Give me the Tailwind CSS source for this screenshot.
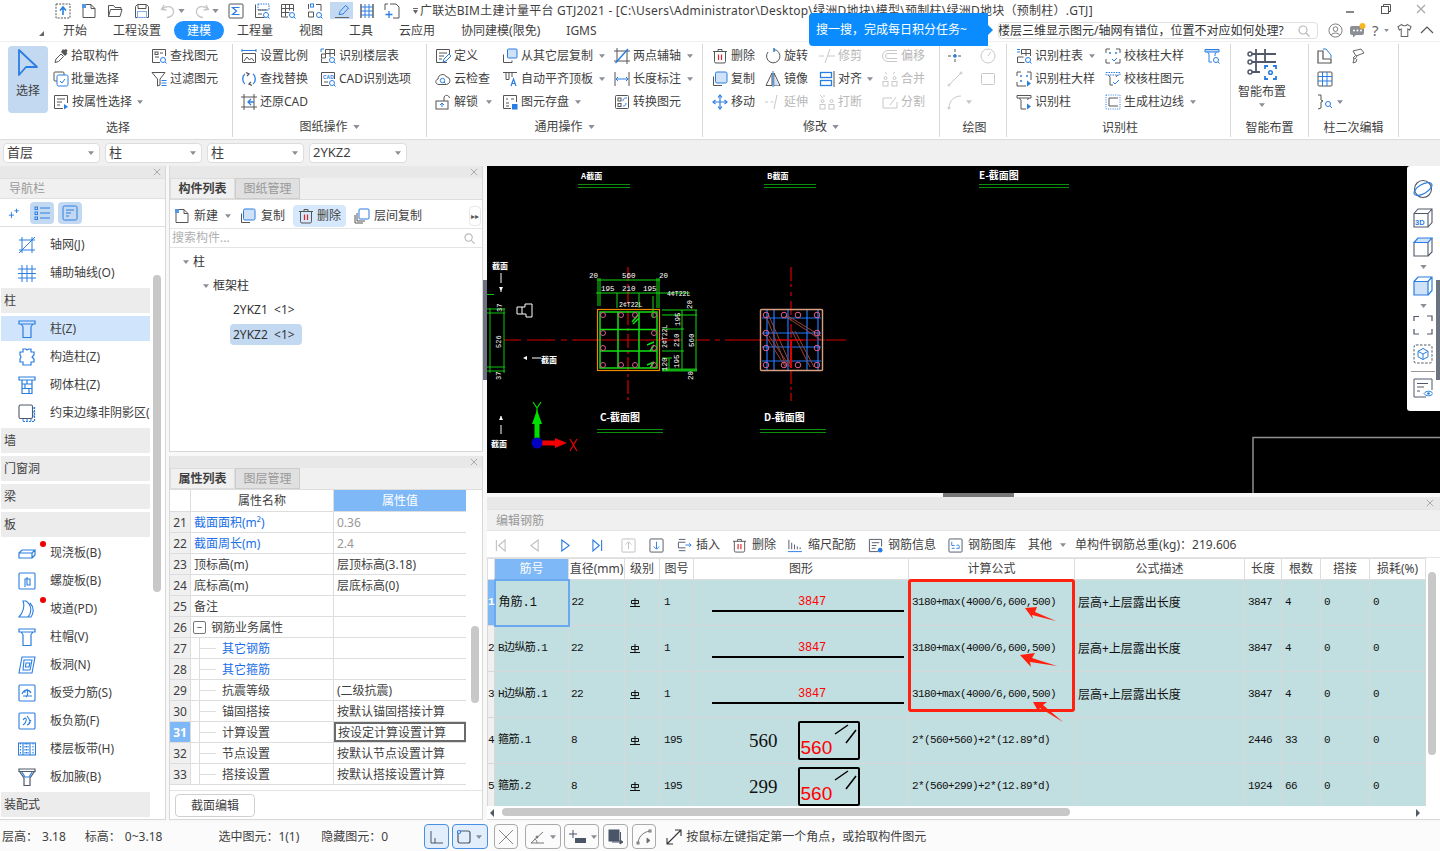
<!DOCTYPE html>
<html lang="zh-CN">
<head>
<meta charset="UTF-8">
<title>广联达BIM土建计量平台 GTJ2021</title>
<script src="https://cdn.jsdelivr.net/npm/@tailwindcss/browser@4"></script>
</head>
<body class="w-[1440px] h-[851px] overflow-hidden bg-[#fafafa] text-xs text-[#3f3f3f] font-['Noto_Sans','Noto_Sans_CJK_SC',sans-serif]">

<!-- icon sprites -->
<svg class="hidden" xmlns="http://www.w3.org/2000/svg">
  <defs>
    <linearGradient id="tlogo" x1="0" y1="0" x2="0" y2="1"><stop offset="0" stop-color="#1fd0f5"/><stop offset="1" stop-color="#0a7ff0"/></linearGradient>
  </defs>
  <symbol id="car" viewBox="0 0 8 5"><path d="M0 0h8L4 5z" fill="#8a8f98"/></symbol>
  <symbol id="x" viewBox="0 0 10 10"><path d="M1 1l8 8M9 1l-8 8" stroke="#a8a8a8" stroke-width="1.2" fill="none"/></symbol>
  <symbol id="rb" viewBox="0 0 10 9" fill="none" stroke="#111"><path d="M5 0v8M1.500 2.500h7v3h-7zM0 8.500h10"/></symbol>
  <!-- quick access -->
  <symbol id="q-up" viewBox="0 0 16 16" fill="none"><rect x="1" y="1" width="14" height="14" stroke="#555" stroke-dasharray="2 1.2"/><path d="M8 12V5M5 7.5L8 4l3 3.5" stroke="#2a7de1" stroke-width="1.6"/></symbol>
  <symbol id="q-new" viewBox="0 0 16 16" fill="none"><path d="M5 1.5h5l4 4v9H2V5" stroke="#555"/><path d="M10 1.5v4h4" stroke="#555"/><path d="M1 1h4v4H1z" fill="#2a7de1" opacity=".8"/></symbol>
  <symbol id="q-open" viewBox="0 0 16 16" fill="none" stroke="#555"><path d="M1.5 13.5v-11h5l1.500 2h6v2"/><path d="M1.500 13.500l2-7h11.500l-2 7z"/></symbol>
  <symbol id="q-save" viewBox="0 0 16 16" fill="none" stroke="#555"><path d="M1.500 3.500l2-2h9l2 2v11h-13z"/><path d="M4 1.500v4h8v-4"/><rect x="3.500" y="8.500" width="9" height="6" stroke="#7eb1ee"/></symbol>
  <symbol id="q-undo" viewBox="0 0 16 16" fill="none" stroke="#c4c4c4" stroke-width="1.300"><path d="M4 2L1.500 6.500 6.500 7"/><path d="M2 6.500c3-4 10-4 11.500 1 1 4-3 7-6.500 7"/></symbol>
  <symbol id="q-redo" viewBox="0 0 16 16" fill="none" stroke="#c4c4c4" stroke-width="1.300"><path d="M12 2l2.500 4.500L9.500 7"/><path d="M14 6.500c-3-4-10-4-11.500 1-1 4 3 7 6.500 7"/></symbol>
  <symbol id="q-sum" viewBox="0 0 16 16" fill="none"><rect x="1" y="1" width="14" height="14" rx="1" stroke="#555"/><path d="M11.500 4.500h-7L8.500 8l-4 3.500h7" stroke="#2a7de1" stroke-width="1.200"/></symbol>
  <symbol id="q-tab" viewBox="0 0 16 16" fill="none"><path d="M1.500 1.500v13h9" stroke="#555"/><rect x="4" y="1" width="11" height="6" stroke="#2a7de1" stroke-dasharray="1.500 1"/><path d="M4 7h9M4 11h4" stroke="#555"/><circle cx="12" cy="12" r="2.500" stroke="#2a7de1"/><path d="M14 14l1.500 1.500" stroke="#2a7de1"/></symbol>
  <symbol id="q-grid" viewBox="0 0 16 16" fill="none"><path d="M8 14H1.500V1.500h12V8M1.500 5.500h12M1.500 9.500h8M5.500 1.500v12M9.500 1.500v6" stroke="#555"/><circle cx="12" cy="12" r="2.500" stroke="#2a7de1"/><path d="M14 14l1.500 1.500" stroke="#2a7de1"/></symbol>
  <symbol id="q-grid2" viewBox="0 0 16 16" fill="none"><path d="M1.500 9v5h5V9zM9 1.500h5V8M1.500 1v5" stroke="#555"/><rect x="3.500" y="1" width="3" height="3" stroke="#2a7de1"/><circle cx="12" cy="12" r="2.500" stroke="#2a7de1"/><path d="M14 14l1.500 1.500" stroke="#2a7de1"/></symbol>
  <symbol id="q-pen" viewBox="0 0 16 16" fill="none"><path d="M1 14.500h14" stroke="#666"/><path d="M5 11.500l1-3 5.500-6 3 2.500L9 11z" stroke="#2a7de1"/></symbol>
  <symbol id="q-bars" viewBox="0 0 16 16" fill="none"><path d="M2 1v14M14 1v14" stroke="#555" stroke-width="1.400"/><path d="M2 4h12M2 8h12M2 12h12M6 1v14M10 1v14" stroke="#2a7de1"/></symbol>
  <symbol id="q-cross" viewBox="0 0 16 16" fill="none"><path d="M6 1h6l3 3v11H9M1 7V1h3" stroke="#555"/><path d="M5 8v7M1.500 11.500h7" stroke="#2a7de1" stroke-width="1.300"/></symbol>
  <!-- ribbon -->
  <symbol id="r-arrow" viewBox="0 0 24 30" fill="none"><path d="M3 2l18 17H10L3 27z" stroke="#2a7de1" stroke-width="1.800" stroke-linejoin="round"/></symbol>
  <symbol id="r-pick" viewBox="0 0 16 16" fill="none"><path d="M2 14.500L3 11l5-5 2.500 2.500-5 5z" stroke="#555"/><path d="M8 4l4 4 2.500-2.500-1-1 1-2-1.500-1.500-2 1-1-1z" fill="#555"/></symbol>
  <symbol id="r-batch" viewBox="0 0 16 16" fill="none"><rect x="1" y="1" width="10" height="9" rx="1" stroke="#555"/><rect x="4" y="4" width="11" height="11" rx="1.500" stroke="#2a7de1" fill="#fff"/><path d="M7 10l2 2 3-4" stroke="#2a7de1"/></symbol>
  <symbol id="r-attr" viewBox="0 0 16 16" fill="none"><path d="M10 14.500H1.500v-13h13V9" stroke="#555"/><path d="M4 5h8M4 8h5M4 11h3" stroke="#555"/><path d="M11 10v5.500l4-2.700z" fill="#2a7de1"/></symbol>
  <symbol id="r-find" viewBox="0 0 16 16" fill="none"><path d="M9 14.500H1.500v-13h13V8" stroke="#555"/><rect x="4" y="4" width="3" height="2.500" stroke="#555"/><path d="M9 5h3M4 9h4" stroke="#555"/><circle cx="12" cy="12" r="2.500" stroke="#2a7de1"/><path d="M14 14l1.500 1.500" stroke="#2a7de1"/></symbol>
  <symbol id="r-filter" viewBox="0 0 16 16" fill="none"><path d="M1 1.500h13L9 8v6l-2.500 1V8z" stroke="#555"/><path d="M10.500 9.500h5M10.500 12h5M10.500 14.500h5" stroke="#2a7de1"/></symbol>
  <symbol id="r-scale" viewBox="0 0 16 16" fill="none"><path d="M1 1v3M15 1v3M1 2.500h14" stroke="#2a7de1"/><path d="M1.500 5.500h13v9h-13z" stroke="#555"/><path d="M3 13l3-4 2.500 3 2-2 2.500 3" stroke="#555"/></symbol>
  <symbol id="r-floor" viewBox="0 0 16 16" fill="none"><path d="M1.500 6v4h4V6zM1.500 14.500v-4M1.500 14.500h7M5.500 1.500h9V8M5.500 1.500v4M10 1.500V9M5.500 5.500h9" stroke="#555"/><path d="M1 1h3M1 1v3" stroke="#2a7de1"/><circle cx="12" cy="12" r="2.500" stroke="#2a7de1"/><path d="M14 14l1.500 1.500" stroke="#2a7de1"/></symbol>
  <symbol id="r-replace" viewBox="0 0 16 16" fill="none" stroke-width="1.300"><path d="M4 3C1 5 1 11 4 13M12 13c3-2 3-8 0-10" stroke="#2a7de1"/><path d="M5 1.500l3 1.500-2 2M11 14.500L8 13l2-2" stroke="#555"/></symbol>
  <symbol id="r-cadopt" viewBox="0 0 16 16" fill="none"><path d="M9 14.500H1.500v-13h13V8" stroke="#555"/><text x="3" y="7.500" font-size="5" fill="#2a7de1" font-family="Liberation Sans" font-weight="700">CAD</text><path d="M4 11h4" stroke="#555"/><circle cx="12" cy="12" r="2.500" stroke="#2a7de1"/><path d="M14 14l1.500 1.500" stroke="#2a7de1"/></symbol>
  <symbol id="r-restore" viewBox="0 0 16 16" fill="none"><path d="M3 0v16M13 0v16M0 3h16M0 13h16" stroke="#555"/><path d="M10 5L7 8l3 3M7 8h6" stroke="#2a7de1" stroke-width="1.300"/></symbol>
  <symbol id="r-def" viewBox="0 0 16 16" fill="none"><path d="M12 14.500H1.500v-13h13v5" stroke="#555"/><path d="M4 5h8M4 8h5M4 11h3" stroke="#555"/><path d="M8 14l1-3 5-5 2 2-5 5z" stroke="#2a7de1"/></symbol>
  <symbol id="r-cloud" viewBox="0 0 16 16" fill="none"><path d="M4 13.500C0 13.500 0 8.500 3 8c0-5 7-6 8.500-2 4 0 5 6.500 0 7.500z" stroke="#555"/><circle cx="7.500" cy="9.500" r="2.200" stroke="#2a7de1"/><path d="M9 11l1.500 1.500" stroke="#2a7de1"/></symbol>
  <symbol id="r-lock" viewBox="0 0 16 16" fill="none"><rect x="1" y="7" width="12" height="8" stroke="#555"/><path d="M9 7V4c0-3.500 5-3.500 5.500 0" stroke="#555"/><path d="M7 13V9.500M5 11l2-2 2 2" stroke="#2a7de1"/></symbol>
  <symbol id="r-lcopy" viewBox="0 0 16 16" fill="none"><path d="M1.500 6.500v8h8.500v-2" stroke="#555"/><rect x="5.500" y="1" width="9.500" height="9" rx="1" fill="#cfe2f8" stroke="#2a7de1"/></symbol>
  <symbol id="r-lcopy2" viewBox="0 0 16 16" fill="none"><path d="M1 7v8h8M3 5v8h8" stroke="#555"/><rect x="5" y="1" width="10" height="10" rx="1" fill="#fff" stroke="#2a7de1"/></symbol>
  <symbol id="r-axis2" viewBox="0 0 16 16" fill="none"><path d="M3 0v14M13 2v14M0 3h16M0 13h16" stroke="#555"/><path d="M1.500 15L14 1" stroke="#2a7de1" stroke-width="1.400"/></symbol>
  <symbol id="r-align" viewBox="0 0 16 16" fill="none"><path d="M1 1.500h14" stroke="#555"/><path d="M4 1.500v7h3v-7M10 1.500V6" stroke="#555"/><path d="M9 15l2.500-7L14 15M10 12.500h3" stroke="#2a7de1" stroke-width="1.200"/></symbol>
  <symbol id="r-dim" viewBox="0 0 16 16" fill="none"><path d="M1 1v14M15 1v14" stroke="#555"/><path d="M2 8h12M4 6L2 8l2 2M12 6l2 2-2 2" stroke="#2a7de1"/></symbol>
  <symbol id="r-store" viewBox="0 0 16 16" fill="none"><path d="M9 14.500H1.500v-13h13V8" stroke="#555"/><path d="M4 5h2M9 5h3M4 9h3M4 12h3" stroke="#555"/><rect x="10" y="10" width="5.500" height="5.500" fill="#2a7de1"/></symbol>
  <symbol id="r-conv" viewBox="0 0 16 16" fill="none"><rect x="1.500" y="1.500" width="13" height="13" rx="1" stroke="#555"/><rect x="4" y="9.500" width="3" height="3" stroke="#555"/><rect x="4" y="4" width="3" height="3" stroke="#555"/><path d="M9 7c0-3 2-3 4-3M12 9c0 3-2 3-3 3" stroke="#2a7de1"/></symbol>
  <symbol id="r-del" viewBox="0 0 16 16" fill="none"><path d="M1 3.500h14M6 3.500v-2h4v2M2.500 3.500v10a1.500 1.500 0 001.500 1.500h8a1.500 1.500 0 001.500-1.500v-10" stroke="#555"/><path d="M6.500 6.500v5.500M9.500 6.500v5.500" stroke="#e0202a" stroke-width="1.200"/></symbol>
  <symbol id="r-rot" viewBox="0 0 16 16" fill="none"><path d="M9 1.500A6.700 6.700 0 113 4" stroke="#555"/><path d="M9 0v4" stroke="#2a7de1" stroke-width="1.500"/></symbol>
  <symbol id="r-trim" viewBox="0 0 16 16" fill="none" stroke="#c8c8c8"><path d="M0 8h5M9 8h7M11 1L6 15"/></symbol>
  <symbol id="r-offs" viewBox="0 0 16 16" fill="none" stroke="#c8c8c8"><path d="M15 2.500H6a5 5 0 000 11h9M15 5.500H6a2 2 0 000 5h9"/></symbol>
  <symbol id="r-copy" viewBox="0 0 16 16" fill="none"><path d="M1.500 5.500v9H10" stroke="#555"/><rect x="3.500" y="1" width="11.500" height="11" rx="1.500" fill="#cfe2f8" stroke="#2a7de1"/></symbol>
  <symbol id="r-mirr" viewBox="0 0 16 16" fill="none"><path d="M7 2L1 14.500h6zM9 2l6 12.500H9z" stroke="#555"/><path d="M8 0v16" stroke="#2a7de1"/><path d="M9.500 5l4.500 9.500H9.500z" fill="#cfe2f8"/></symbol>
  <symbol id="r-aln" viewBox="0 0 16 16" fill="none"><rect x="1.500" y="1.500" width="11" height="5" stroke="#2a7de1" stroke-width="1.300"/><rect x="1.500" y="9.500" width="11" height="5" stroke="#2a7de1" stroke-width="1.300"/><path d="M15 0v16" stroke="#555"/></symbol>
  <symbol id="r-merge" viewBox="0 0 16 16" fill="none" stroke="#c8c8c8"><circle cx="3.500" cy="7" r="1.500"/><circle cx="12.500" cy="7" r="1.500"/><rect x="1" y="10.500" width="5" height="4.500"/><rect x="10" y="10.500" width="5" height="4.500"/><path d="M3 1l2 2M13 1l-2 2"/></symbol>
  <symbol id="r-move" viewBox="0 0 16 16" fill="none" stroke="#2a7de1" stroke-width="1.200"><path d="M8 2v12M2 8h12"/><path d="M6 3.500L8 1l2 2.500M6 12.500L8 15l2-2.500M3.500 6L1 8l2.500 2M12.500 6L15 8l-2.500 2"/></symbol>
  <symbol id="r-ext" viewBox="0 0 16 16" fill="none" stroke="#c8c8c8"><path d="M0 8h3M5.500 8h3M12 1L9 15"/></symbol>
  <symbol id="r-brk" viewBox="0 0 16 16" fill="none" stroke="#c8c8c8"><circle cx="3.500" cy="7" r="1.500"/><circle cx="12.500" cy="7" r="1.500"/><rect x="1" y="10.500" width="5" height="4.500"/><rect x="10" y="10.500" width="5" height="4.500"/><path d="M1 1l3 3M5 1v2"/></symbol>
  <symbol id="r-split" viewBox="0 0 16 16" fill="none" stroke="#c8c8c8"><path d="M15 8v6H1V4h9"/><path d="M8 11l6-8"/></symbol>
  <symbol id="r-pt" viewBox="0 0 16 16" fill="none"><path d="M8 1v14M1 8h14" stroke="#555" stroke-dasharray="3 2"/><circle cx="8" cy="8" r="1.800" fill="#2a7de1"/></symbol>
  <symbol id="r-gauge" viewBox="0 0 16 16" fill="none" stroke="#c8c8c8"><circle cx="8" cy="8" r="7"/><path d="M8 8l3-4"/></symbol>
  <symbol id="r-line" viewBox="0 0 16 16" fill="none" stroke="#c8c8c8"><path d="M2 14L14 2"/><circle cx="2" cy="14" r="1"/><circle cx="14" cy="2" r="1"/></symbol>
  <symbol id="r-rect" viewBox="0 0 16 16" fill="none" stroke="#c8c8c8"><rect x="1.500" y="2.500" width="13" height="11" rx="1"/></symbol>
  <symbol id="r-arc" viewBox="0 0 16 16" fill="none" stroke="#c8c8c8"><path d="M2 14C2 7 7 2 14 2"/><circle cx="2" cy="14" r="1"/></symbol>
  <symbol id="r-ctab" viewBox="0 0 16 16" fill="none"><path d="M1.500 9v5.500h7M1.500 9h6M5.500 1.500h9V8M5.500 1.500v5M10 1.500V8M5.500 5.500h9" stroke="#555"/><path d="M1 1.500h3M1 4h3" stroke="#2a7de1"/><circle cx="12" cy="12" r="2.500" stroke="#2a7de1"/><path d="M14 14l1.500 1.500" stroke="#2a7de1"/></symbol>
  <symbol id="r-cdet" viewBox="0 0 16 16" fill="none"><path d="M1 5V1h4M11 1h4v8M1 11v4h9" stroke="#555"/><circle cx="5" cy="5" r="1" fill="#2a7de1"/><circle cx="11" cy="5" r="1" fill="#2a7de1"/><circle cx="5" cy="10" r="1" fill="#2a7de1"/><path d="M11 9.500v6l4-3z" fill="#2a7de1"/></symbol>
  <symbol id="r-col" viewBox="0 0 16 16" fill="none"><path d="M1 1.500h14V4H1zM3.500 4l1 2M12.500 4l-1 2M5 6v9h5" stroke="#555"/><path d="M11 9.500v6l4-3z" fill="#2a7de1"/></symbol>
  <symbol id="r-chk1" viewBox="0 0 16 16" fill="none"><path d="M1 5V1h4M11 1h4v4M1 11v4h4" stroke="#555"/><path d="M10 15h5v-4" stroke="#555"/><circle cx="5" cy="5" r="1" fill="#2a7de1"/><circle cx="11" cy="5" r="1" fill="#2a7de1"/><path d="M7 11l2 2 3-3" stroke="#2a7de1"/></symbol>
  <symbol id="r-chk2" viewBox="0 0 16 16" fill="none"><path d="M1 1.500h14V4H1z" stroke="#2a7de1" stroke-dasharray="1.500 1"/><path d="M3.500 4l1.500 2M12.500 4L11 6M5 6v8h3" stroke="#555"/><path d="M8 11l2 2 4-4" stroke="#2a7de1"/></symbol>
  <symbol id="r-edge" viewBox="0 0 16 16" fill="none"><rect x="1" y="1" width="14" height="14" stroke="#2a7de1" stroke-dasharray="1 1.300"/><path d="M4 12V4h9M4 12h9" stroke="#555"/></symbol>
  <symbol id="r-cfind" viewBox="0 0 16 16" fill="none"><path d="M1 1.500h14V4H1z" fill="#bcd6f5" stroke="#2a7de1"/><path d="M3.500 4l1.500 2M12.500 4L11 6M5 6v8h3M11 6v2" stroke="#2a7de1"/><circle cx="12" cy="12" r="2.500" stroke="#2a7de1"/><path d="M14 14l1.500 1.500" stroke="#2a7de1"/></symbol>
  <symbol id="r-smart" viewBox="0 0 30 32" fill="none"><path d="M9 1v24M18 1v14M3 6h26M3 14h26M3 24h10" stroke="#50586a" stroke-width="1.800"/><circle cx="3" cy="6" r="2" fill="#fff" stroke="#50586a" stroke-width="1.500"/><circle cx="3" cy="14" r="2" fill="#fff" stroke="#50586a" stroke-width="1.500"/><circle cx="3" cy="24" r="2" fill="#fff" stroke="#50586a" stroke-width="1.500"/><path d="M21 18h-3v3M26 18h3v3M21 31h-3v-3M26 31h3v-3" stroke="#2a7de1" stroke-width="1.800"/><circle cx="23.500" cy="24.500" r="1.800" stroke="#2a7de1" stroke-width="1.500"/></symbol>
  <symbol id="r-sec" viewBox="0 0 16 16" fill="none"><path d="M1 15V3h5v8h8v4z" stroke="#555" stroke-width="1.200"/><path d="M6 1h3l5 6v3" stroke="#2a7de1"/></symbol>
  <symbol id="r-brush" viewBox="0 0 16 16" fill="none" stroke="#666"><path d="M3 3l8-2 3 4-8 3zM5 8l-2 2 2 1 2-3M4 11l-1 4 3-1 1-3"/></symbol>
  <symbol id="r-mesh" viewBox="0 0 16 16" fill="none"><rect x="1" y="1" width="14" height="14" rx="1" stroke="#555"/><path d="M1 5.500h14M1 10h14M5.500 1v14M10 1v14" stroke="#2a7de1"/></symbol>
  <symbol id="r-brace" viewBox="0 0 16 16" fill="none"><path d="M1 1h3v5l2 1-2 1v6l-3 1" stroke="#555"/><circle cx="11" cy="10" r="2.500" stroke="#2a7de1"/><path d="M13 12l2 2" stroke="#2a7de1"/></symbol>
  <!-- top right -->
  <symbol id="t-user" viewBox="0 0 16 16" fill="none" stroke="#777"><circle cx="8" cy="8" r="7"/><circle cx="8" cy="6.500" r="2.500"/><path d="M3.500 13c1-3 8-3 9 0"/></symbol>
  <symbol id="t-chat" viewBox="0 0 16 16"><path d="M2 3h10a2 2 0 012 2v5a2 2 0 01-2 2H6l-3 2.500V12H2a2 2 0 01-2-2V5a2 2 0 012-2z" fill="#8b8f94"/><circle cx="4" cy="7.500" r="1" fill="#fff"/><circle cx="7.500" cy="7.500" r="1" fill="#fff"/><circle cx="11" cy="7.500" r="1" fill="#fff"/><circle cx="12.500" cy="3" r="3" fill="#f5b820"/></symbol>
  <symbol id="t-shirt" viewBox="0 0 16 16" fill="none" stroke="#666" stroke-width="1.100"><path d="M5 1.500L1 4l1.500 3.500L4.500 6.500v8h7v-8l2 1L15 4l-4-2.500c-1 2-5 2-6 0z"/></symbol>
  <!-- nav -->
  <symbol id="n-axis" viewBox="0 0 18 18" fill="none" stroke="#2a7de1"><path d="M4 1v16M14 1v16M1 4h16M1 14h16M1 17L17 1"/></symbol>
  <symbol id="n-aux" viewBox="0 0 18 18" fill="none" stroke="#2a7de1"><path d="M4 1v17M9 1v17M14 1v17M0 5h18M0 9.500h18M0 14h18"/></symbol>
  <symbol id="n-col" viewBox="0 0 18 18" fill="none" stroke="#2a7de1" stroke-width="1.200"><path d="M1 1h16v3H1zM3 4l2 2.500M15 4l-2 2.500M5 6.500v11h8v-11"/></symbol>
  <symbol id="n-cons" viewBox="0 0 18 18" fill="none" stroke="#2a7de1" stroke-width="1.200"><path d="M5 1h3l1 1 2-1h2v3h3v3l-2 2 2 2v3h-3v3H5v-3H2v-3l1-2-1-2V4h3z"/></symbol>
  <symbol id="n-brick" viewBox="0 0 18 18" fill="none" stroke="#2a7de1" stroke-width="1.200"><path d="M1 1h16v3H1zM4 4v13.500h10V4M4 8h10M4 12.500h10M9 4v4M7 8v4.500M11 12.500v5"/></symbol>
  <symbol id="n-edge" viewBox="0 0 18 18" fill="none"><rect x="1" y="1" width="13.500" height="13.500" rx="1.500" stroke="#50586a" stroke-width="1.100"/><path d="M16.500 3v14.500H4" stroke="#2a7de1" stroke-width="1.200" stroke-dasharray="2 1"/><path d="M14.500 4H17M14.500 8H17M14.500 12H17M5 15v2M9 15v2M13 15v2" stroke="#2a7de1"/></symbol>
  <symbol id="n-slab" viewBox="0 0 18 18" fill="none" stroke="#2a7de1" stroke-width="1.200"><path d="M1 9h13v5H1zM1 9l3-3h13l-3 3M17 6v5l-3 3"/></symbol>
  <symbol id="n-spiral" viewBox="0 0 18 18" fill="none" stroke="#2a7de1" stroke-width="1.100"><rect x="1" y="1" width="16" height="16" rx="1"/><path d="M9 5v8h3V7H7v8"/></symbol>
  <symbol id="n-ramp" viewBox="0 0 18 18" fill="none" stroke="#2a7de1" stroke-width="1.100"><path d="M5 1h3c6 4 6 12 2 16H1c4-4 6-11 4-16zM12 3c4 4 4 10 1 14h-3"/></symbol>
  <symbol id="n-hole" viewBox="0 0 18 18" fill="none" stroke="#2a7de1" stroke-width="1.100"><path d="M4 1h13l-3 16H1z"/><path d="M6 4h8l-2 10H5z"/><path d="M8 7h4l-1 4H7.500z"/></symbol>
  <symbol id="n-rein" viewBox="0 0 18 18" fill="none" stroke="#2a7de1" stroke-width="1.100"><rect x="1" y="1" width="16" height="16" rx="1"/><path d="M4 10c2-5 7-5 9-1M5 12h9M9 5c1 3 1 6-1 8M5 8h3"/></symbol>
  <symbol id="n-neg" viewBox="0 0 18 18" fill="none" stroke="#2a7de1" stroke-width="1.100"><rect x="1" y="1" width="16" height="16" rx="1"/><path d="M5 8c2-3 4-2 3 1s-3 4-3 4M9 4c3 4 5 7 0 9M13 8l-2 3"/></symbol>
  <symbol id="n-band" viewBox="0 0 18 18" fill="none" stroke="#2a7de1" stroke-width="1.100"><rect x="0.500" y="3" width="17" height="12"/><path d="M5 3v12M12 3v12"/><path d="M7 3v12M8.500 3v12M10 3v12M2.500 3v12M15 3v12" stroke-dasharray="1.500 1.500"/></symbol>
  <symbol id="n-hau" viewBox="0 0 18 18" fill="none" stroke-width="1.200"><path d="M1 1h16v2.500H1z" stroke="#50586a"/><path d="M1.500 3.500L6 10V17.500h6V10l4.500-6.500" stroke="#50586a"/><path d="M3.500 3.500L7 9h4l3.500-5.500" stroke="#2a7de1"/></symbol>
  <symbol id="n-plus" viewBox="0 0 14 14" fill="none" stroke="#2a7de1" stroke-width="1.100"><path d="M4 6v7M1 9.500h6M10 2v5M7.500 4.500h5"/></symbol>
  <symbol id="n-list" viewBox="0 0 16 16" fill="none" stroke="#2a7de1"><rect x="1" y="2" width="2.500" height="2.500"/><rect x="1" y="7" width="2.500" height="2.500"/><rect x="1" y="12" width="2.500" height="2.500"/><path d="M6 3h10M6 8h10M6 13h10"/></symbol>
  <symbol id="n-card" viewBox="0 0 16 16" fill="none" stroke="#2a7de1"><rect x="1" y="1" width="14" height="14" rx="1.500"/><path d="M4 5h8M4 8h5M4 11h3"/></symbol>
  <!-- rebar bar -->
  <symbol id="b-first" viewBox="0 0 12 14" fill="none" stroke="#c0c0c0" stroke-width="1.200"><path d="M1.500 1v12M11 1L4 7l7 6z"/></symbol>
  <symbol id="b-prev" viewBox="0 0 12 14" fill="none" stroke="#c0c0c0" stroke-width="1.200"><path d="M10 1L2 7l8 6z"/></symbol>
  <symbol id="b-next" viewBox="0 0 12 14" fill="none" stroke="#2a7de1" stroke-width="1.200"><path d="M2 1l8 6-8 6z"/></symbol>
  <symbol id="b-last" viewBox="0 0 12 14" fill="none" stroke="#2a7de1" stroke-width="1.200"><path d="M10.500 1v12M1 1l7 6-7 6z"/></symbol>
  <symbol id="b-up" viewBox="0 0 16 16" fill="none" stroke="#c0c0c0"><rect x="1" y="1" width="14" height="14" rx="1"/><path d="M8 12V4.500M5 7l3-3 3 3"/></symbol>
  <symbol id="b-dn" viewBox="0 0 16 16" fill="none"><rect x="1" y="1" width="14" height="14" rx="1" stroke="#50586a"/><path d="M8 4v7.500M5 9l3 3 3-3" stroke="#2a7de1"/></symbol>
  <symbol id="b-ins" viewBox="0 0 16 16" fill="none"><path d="M9 4.500H1.500v6H9" stroke="#50586a"/><path d="M9 1.500H2M9 13.500H2" stroke="#50586a"/><path d="M9 7.500h6M13 5.500l2 2-2 2" stroke="#2a7de1"/></symbol>
  <symbol id="b-scale" viewBox="0 0 16 16" fill="none"><path d="M1 14.500h15" stroke="#2a7de1"/><path d="M2 2v10M5 5v7M8 7v5M11 9v3M14 10v2" stroke="#50586a"/></symbol>
  <symbol id="b-info" viewBox="0 0 16 16" fill="none"><path d="M11 14.500H1.500v-13h13V9" stroke="#50586a"/><path d="M4 5h8M4 8h5M4 11h4" stroke="#50586a"/><circle cx="13" cy="13" r="2.500" fill="#2a7de1"/></symbol>
  <symbol id="b-lib" viewBox="0 0 16 16" fill="none"><rect x="1" y="1" width="14" height="14" rx="1" stroke="#50586a"/><path d="M4 11h3M9 11h3M4 4v4h3M9 8c3-2 3 1 3 3" stroke="#2a7de1"/></symbol>
  <!-- status -->
  <symbol id="s-angle" viewBox="0 0 16 16" fill="none" stroke="#4a5568"><path d="M2 2v12h12"/><path d="M6 14V9"/></symbol>
  <symbol id="s-box" viewBox="0 0 16 16" fill="none" stroke="#4a5568" stroke-width="1.200"><rect x="2" y="2" width="12" height="12" rx="2"/><circle cx="3" cy="3" r="1.500" fill="#fff" stroke="#2a7de1"/></symbol>
  <symbol id="s-x" viewBox="0 0 16 16" fill="none" stroke="#888"><path d="M1 1l14 14M15 1L1 15"/></symbol>
  <symbol id="s-ang2" viewBox="0 0 16 16" fill="none" stroke="#777"><path d="M2 14h13M2 14L14 3M8 14c0-2-1-4-3-4"/><circle cx="8" cy="8" r="1" fill="#777"/></symbol>
  <symbol id="s-plus" viewBox="0 0 20 16" fill="none"><path d="M5 1v8M1 5h8" stroke="#4a5568"/><rect x="7" y="9" width="11" height="5" fill="#4a5568"/></symbol>
  <symbol id="s-win" viewBox="0 0 16 16" fill="none" stroke="#4a5568"><rect x="1" y="1" width="10" height="11" fill="#4a5568"/><path d="M12.500 3v10H4"/><path d="M12 11v4l3-2z" fill="#4a5568"/></symbol>
  <symbol id="s-curve" viewBox="0 0 16 16" fill="none" stroke="#777"><path d="M2 15c0-7 5-12 12-13"/><rect x="1" y="13" width="2" height="2"/><rect x="13" y="1" width="2" height="2"/><path d="M11 9v5l3-2.500z" fill="#666"/></symbol>
  <symbol id="s-exp" viewBox="0 0 16 16" fill="none" stroke="#333" stroke-width="1.100"><path d="M1 15L15 1M9 1h6v6M1 9v6h6"/></symbol>
  <!-- float bar -->
  <symbol id="f-globe" viewBox="0 0 20 20" fill="none"><circle cx="10" cy="10" r="8.500" stroke="#50586a" stroke-width="1.100"/><ellipse cx="10" cy="10" rx="10" ry="4.500" transform="rotate(-30 10 10)" stroke="#2a7de1" stroke-width="1.200"/></symbol>
  <symbol id="f-3d" viewBox="0 0 20 20" fill="none"><path d="M1 5.500V19h14V5.500zM1 5.500L5 1h14v13.500L15 19M15 5.500L19 1" stroke="#50586a" stroke-width="1.100"/><text x="2" y="16.500" font-size="7.500" font-weight="700" font-family="Liberation Sans" fill="#2a7de1">3D</text></symbol>
  <symbol id="f-top" viewBox="0 0 20 20" fill="none"><path d="M1 5.500V19h14V5.500M15 19l4-4V1" stroke="#50586a" stroke-width="1.100"/><path d="M1 5.500L5 1h14l-4 4.500z" fill="#cfe2f8" stroke="#2a7de1" stroke-width="1.200"/></symbol>
  <symbol id="f-cube" viewBox="0 0 20 20" fill="none" stroke="#2a7de1" stroke-width="1.200"><path d="M1 5.500V19h14V5.500z" fill="#cfe2f8"/><path d="M1 5.500L5 1h14v13.500L15 19M15 5.500L19 1"/></symbol>
  <symbol id="f-corner" viewBox="0 0 20 20" fill="none" stroke="#50586a" stroke-width="1.200"><path d="M1 6V1.500h5M14 1h5v5M19 14v5h-5M6 19H1v-5"/></symbol>
  <symbol id="f-dash" viewBox="0 0 20 20" fill="none"><rect x="1" y="1" width="18" height="18" rx="2" stroke="#50586a" stroke-dasharray="2.500 1.500"/><path d="M10 4.500l5 2.800v5.500l-5 2.700-5-2.700V7.300zM5 7.300l5 2.700 5-2.700M10 10v5.500" stroke="#2a7de1"/></symbol>
  <symbol id="f-eye" viewBox="0 0 20 20" fill="none"><path d="M13 19H1V1h18v11" stroke="#50586a"/><path d="M4 5.500h11M4 9h7M4 13h3" stroke="#50586a"/><path d="M11 15.500c2-3 7-3 9 0-2 3-7 3-9 0z" fill="#fff" stroke="#2a7de1"/><circle cx="15.500" cy="15.500" r="1.300" fill="#2a7de1"/></symbol>
  <symbol id="mag" viewBox="0 0 12 12" fill="none" stroke="#b8b8b8" stroke-width="1.200"><circle cx="5" cy="5" r="4"/><path d="M8 8l3.500 3.500"/></symbol>
</svg>

<!-- title row -->
<header class="relative h-[41px] bg-white">
  <svg class="absolute left-[8px] top-[3px] w-[32px] h-[30px]" viewBox="0 0 32 30"><path d="M3 4c7 1 21 1 26-1 2 0 2 3 0 5-4 3-7 3-9 4-1 4-1 10-1 13 0 4-6 4-6 1 0-5 0-11-1-14-4 0-9-2-11-5-1-2 0-3 2-3z" fill="url(#tlogo)"/></svg>
  <svg class="absolute left-[39px] top-[31px] w-[5px] h-[5px]" viewBox="0 0 5 5"><path d="M5 0v5H0z" fill="#666"/></svg>

  <div class="flex items-center h-[20px] pl-[55px] pt-[1px]">
    <svg class="w-4 h-4 mr-[10px]"><use href="#q-up"/></svg>
    <svg class="w-4 h-4 mr-[10px]"><use href="#q-new"/></svg>
    <svg class="w-4 h-4 mr-[11px]"><use href="#q-open"/></svg>
    <svg class="w-4 h-4 mr-[10px]"><use href="#q-save"/></svg>
    <svg class="w-4 h-4 mr-[2px]"><use href="#q-undo"/></svg><svg class="w-[7px] h-[4px] mr-[9px]"><use href="#car"/></svg>
    <svg class="w-4 h-4 mr-[2px]"><use href="#q-redo"/></svg><svg class="w-[7px] h-[4px] mr-[9px]"><use href="#car"/></svg>
    <svg class="w-4 h-4 mr-[10px]"><use href="#q-sum"/></svg>
    <svg class="w-4 h-4 mr-[10px]"><use href="#q-tab"/></svg>
    <svg class="w-4 h-4 mr-[11px]"><use href="#q-grid"/></svg>
    <svg class="w-4 h-4 mr-[7px]"><use href="#q-grid2"/></svg>
    <span class="flex items-center justify-center w-[23px] h-[17px] bg-[#c3d9f1] mr-[6px]"><svg class="w-4 h-4"><use href="#q-pen"/></svg></span>
    <svg class="w-4 h-4 mr-[9px]"><use href="#q-bars"/></svg>
    <svg class="w-4 h-4 mr-[13px]"><use href="#q-cross"/></svg>
    <svg class="w-[5px] h-[6px] mr-[2px]" viewBox="0 0 5 6"><path d="M0 0h5v1H0zM0 2h5L2.500 6z" fill="#666"/></svg>
    <span class="whitespace-nowrap tracking-[0.25px]">广联达BIM土建计量平台 GTJ2021 - [C:\Users\Administrator\Desktop\绿洲D地块\模型\预制柱\绿洲D地块（预制柱）.GTJ]</span>
  </div>
  <svg class="absolute left-[1346px] top-[11px] w-[8px] h-[2px]" viewBox="0 0 8 2"><path d="M0 1h8" stroke="#888" stroke-width="2"/></svg>
  <svg class="absolute left-[1381px] top-[4px] w-[10px] h-[10px]" viewBox="0 0 10 10" fill="none" stroke="#555"><rect x="0.500" y="2.500" width="7" height="7"/><path d="M2.500 2.500v-2h7v7h-2"/></svg>
  <svg class="absolute left-[1416px] top-[4px] w-[10px] h-[10px]"><use href="#x"/></svg>

  <div class="flex items-center h-[21px] pl-[63px] gap-[26px]">
    <span>开始</span>
    <span>工程设置</span>
    <span class="-mx-[13px] px-[13px] h-[19px] leading-[19px] rounded-full bg-[#1e90ff] text-white">建模</span>
    <span>工程量</span>
    <span>视图</span>
    <span>工具</span>
    <span>云应用</span>
    <span>协同建模(限免)</span>
    <span>IGMS</span>
  </div>

  <!-- search -->
  <div class="absolute left-[998px] top-[22px] w-[320px] h-[17px] border border-[#e0e0e0] rounded-sm flex items-center overflow-hidden text-[#333]">
    <span class="whitespace-nowrap -ml-[1px]">楼层三维显示图元/轴网有错位，位置不对应如何处理?</span>
    <svg class="absolute right-[7px] top-[2px] w-3 h-3"><use href="#mag"/></svg>
  </div>
  <svg class="absolute left-[1328px] top-[23px] w-[15px] h-[15px]"><use href="#t-user"/></svg>
  <svg class="absolute left-[1350px] top-[23px] w-[16px] h-[16px]"><use href="#t-chat"/></svg>
  <span class="absolute left-[1372px] top-[20px] text-[15px] leading-[20px] text-[#666]">?</span>
  <svg class="absolute left-[1384px] top-[29px] w-[5px] h-[3px]"><use href="#car"/></svg>
  <svg class="absolute left-[1397px] top-[23px] w-[15px] h-[15px]"><use href="#t-shirt"/></svg>
  <svg class="absolute left-[1420px] top-[25px] w-[14px] h-[9px]" viewBox="0 0 14 9" fill="none" stroke="#555" stroke-width="1.200"><path d="M1 8l6-6 6 6"/></svg>
</header>

<!-- tooltip -->
<div class="absolute left-[809px] top-[13px] w-[179px] h-[33px] pl-[7px] flex items-center rounded-l-sm bg-[#0a8cff] text-white whitespace-nowrap">搜一搜，完成每日积分任务~</div>
<div class="absolute left-[988px] top-[25px] w-0 h-0 border-y-[5px] border-l-[5px] border-y-transparent border-l-[#0a8cff]"></div>

<!-- ribbon -->
<section class="flex h-[99px] bg-white border-t border-b border-t-[#efefef] border-b-[#dcdcdc]">
  <div class="w-[233px] flex flex-col border-r border-[#d8d8d8] my-[2px]">
    <div class="flex h-[70px]">
      <div class="ml-[8px] mr-[5px] w-[40px] h-[67px] mt-[2px] rounded-sm bg-[#c3d9f1] flex flex-col items-center pt-[2px]">
        <svg class="w-[24px] h-[30px]"><use href="#r-arrow"/></svg>
        <span class="mt-[5px]">选择</span>
      </div>
      <div class="w-[98px]">
        <div class="flex items-center h-[23px]"><svg class="w-4 h-4 mr-[2px]"><use href="#r-pick"/></svg>拾取构件</div>
        <div class="flex items-center h-[23px]"><svg class="w-4 h-4 mr-[2px]"><use href="#r-batch"/></svg>批量选择</div>
        <div class="flex items-center h-[23px] whitespace-nowrap"><svg class="w-4 h-4 mr-[3px]"><use href="#r-attr"/></svg>按属性选择<svg class="w-[6px] h-[4px] ml-[5px]"><use href="#car"/></svg></div>
      </div>
      <div>
        <div class="flex items-center h-[23px]"><svg class="w-4 h-4 mr-[3px]"><use href="#r-find"/></svg>查找图元</div>
        <div class="flex items-center h-[23px]"><svg class="w-4 h-4 mr-[3px]"><use href="#r-filter"/></svg>过滤图元</div>
      </div>
    </div>
    <div class="mt-[6px] text-center pl-[4px]">选择</div>
  </div>

  <div class="w-[194px] flex flex-col border-r border-[#d8d8d8] my-[2px]">
    <div class="flex h-[70px] pl-[8px]">
      <div class="w-[79px]">
        <div class="flex items-center h-[23px]"><svg class="w-4 h-4 mr-[3px]"><use href="#r-scale"/></svg>设置比例</div>
        <div class="flex items-center h-[23px]"><svg class="w-4 h-4 mr-[3px]"><use href="#r-replace"/></svg>查找替换</div>
        <div class="flex items-center h-[23px]"><svg class="w-4 h-4 mr-[3px]"><use href="#r-restore"/></svg>还原CAD</div>
      </div>
      <div>
        <div class="flex items-center h-[23px]"><svg class="w-4 h-4 mr-[3px]"><use href="#r-floor"/></svg>识别楼层表</div>
        <div class="flex items-center h-[23px]"><svg class="w-4 h-4 mr-[3px]"><use href="#r-cadopt"/></svg>CAD识别选项</div>
      </div>
    </div>
    <div class="mt-[5px] flex items-center justify-center">图纸操作<svg class="w-[7px] h-[4px] ml-[5px]"><use href="#car"/></svg></div>
  </div>

  <div class="w-[276px] flex flex-col border-r border-[#d8d8d8] my-[2px]">
    <div class="flex h-[70px] pl-[8px] whitespace-nowrap">
      <div class="w-[67px]">
        <div class="flex items-center h-[23px]"><svg class="w-4 h-4 mr-[3px]"><use href="#r-def"/></svg>定义</div>
        <div class="flex items-center h-[23px]"><svg class="w-4 h-4 mr-[3px]"><use href="#r-cloud"/></svg>云检查</div>
        <div class="flex items-center h-[23px]"><svg class="w-4 h-4 mr-[3px]"><use href="#r-lock"/></svg>解锁<svg class="w-[6px] h-[4px] ml-[8px]"><use href="#car"/></svg></div>
      </div>
      <div class="w-[112px]">
        <div class="flex items-center h-[23px]"><svg class="w-4 h-4 mr-[3px]"><use href="#r-lcopy"/></svg>从其它层复制<svg class="w-[6px] h-[4px] ml-[6px]"><use href="#car"/></svg></div>
        <div class="flex items-center h-[23px]"><svg class="w-4 h-4 mr-[3px]"><use href="#r-align"/></svg>自动平齐顶板<svg class="w-[6px] h-[4px] ml-[6px]"><use href="#car"/></svg></div>
        <div class="flex items-center h-[23px]"><svg class="w-4 h-4 mr-[3px]"><use href="#r-store"/></svg>图元存盘<svg class="w-[6px] h-[4px] ml-[6px]"><use href="#car"/></svg></div>
      </div>
      <div>
        <div class="flex items-center h-[23px]"><svg class="w-4 h-4 mr-[3px]"><use href="#r-axis2"/></svg>两点辅轴<svg class="w-[6px] h-[4px] ml-[6px]"><use href="#car"/></svg></div>
        <div class="flex items-center h-[23px]"><svg class="w-4 h-4 mr-[3px]"><use href="#r-dim"/></svg>长度标注<svg class="w-[6px] h-[4px] ml-[6px]"><use href="#car"/></svg></div>
        <div class="flex items-center h-[23px]"><svg class="w-4 h-4 mr-[3px]"><use href="#r-conv"/></svg>转换图元</div>
      </div>
    </div>
    <div class="mt-[5px] flex items-center justify-center">通用操作<svg class="w-[7px] h-[4px] ml-[5px]"><use href="#car"/></svg></div>
  </div>

  <div class="w-[237px] flex flex-col border-r border-[#d8d8d8] my-[2px]">
    <div class="flex h-[70px] pl-[9px] whitespace-nowrap">
      <div class="w-[53px]">
        <div class="flex items-center h-[23px]"><svg class="w-4 h-4 mr-[3px]"><use href="#r-del"/></svg>删除</div>
        <div class="flex items-center h-[23px]"><svg class="w-4 h-4 mr-[3px]"><use href="#r-copy"/></svg>复制</div>
        <div class="flex items-center h-[23px]"><svg class="w-4 h-4 mr-[3px]"><use href="#r-move"/></svg>移动</div>
      </div>
      <div class="w-[54px]">
        <div class="flex items-center h-[23px]"><svg class="w-4 h-4 mr-[3px]"><use href="#r-rot"/></svg>旋转</div>
        <div class="flex items-center h-[23px]"><svg class="w-4 h-4 mr-[3px]"><use href="#r-mirr"/></svg>镜像</div>
        <div class="flex items-center h-[23px] text-[#b8b8b8]"><svg class="w-4 h-4 mr-[3px]"><use href="#r-ext"/></svg>延伸</div>
      </div>
      <div class="w-[63px]">
        <div class="flex items-center h-[23px] text-[#b8b8b8]"><svg class="w-4 h-4 mr-[3px]"><use href="#r-trim"/></svg>修剪</div>
        <div class="flex items-center h-[23px]"><svg class="w-4 h-4 mr-[3px]"><use href="#r-aln"/></svg>对齐<svg class="w-[6px] h-[4px] ml-[5px]"><use href="#car"/></svg></div>
        <div class="flex items-center h-[23px] text-[#b8b8b8]"><svg class="w-4 h-4 mr-[3px]"><use href="#r-brk"/></svg>打断</div>
      </div>
      <div class="text-[#b8b8b8]">
        <div class="flex items-center h-[23px]"><svg class="w-4 h-4 mr-[3px]"><use href="#r-offs"/></svg>偏移</div>
        <div class="flex items-center h-[23px]"><svg class="w-4 h-4 mr-[3px]"><use href="#r-merge"/></svg>合并</div>
        <div class="flex items-center h-[23px]"><svg class="w-4 h-4 mr-[3px]"><use href="#r-split"/></svg>分割</div>
      </div>
    </div>
    <div class="mt-[5px] flex items-center justify-center">修改<svg class="w-[7px] h-[4px] ml-[5px]"><use href="#car"/></svg></div>
  </div>

  <div class="w-[67px] flex flex-col border-r border-[#d8d8d8] my-[2px]">
    <div class="flex h-[70px] pl-[7px]">
      <div class="w-[33px]">
        <div class="flex items-center h-[23px]"><svg class="w-4 h-4"><use href="#r-pt"/></svg></div>
        <div class="flex items-center h-[23px]"><svg class="w-4 h-4"><use href="#r-line"/></svg></div>
        <div class="flex items-center h-[23px]"><svg class="w-4 h-4"><use href="#r-arc"/></svg><svg class="w-[6px] h-[4px] ml-[3px] opacity-50"><use href="#car"/></svg></div>
      </div>
      <div>
        <div class="flex items-center h-[23px]"><svg class="w-4 h-4"><use href="#r-gauge"/></svg></div>
        <div class="flex items-center h-[23px]"><svg class="w-4 h-4"><use href="#r-rect"/></svg></div>
      </div>
    </div>
    <div class="mt-[6px] text-center pl-[3px]">绘图</div>
  </div>

  <div class="w-[224px] flex flex-col border-r border-[#d8d8d8] my-[2px]">
    <div class="flex h-[70px] pl-[9px] whitespace-nowrap">
      <div class="w-[89px]">
        <div class="flex items-center h-[23px]"><svg class="w-4 h-4 mr-[3px]"><use href="#r-ctab"/></svg>识别柱表<svg class="w-[6px] h-[4px] ml-[6px]"><use href="#car"/></svg></div>
        <div class="flex items-center h-[23px]"><svg class="w-4 h-4 mr-[3px]"><use href="#r-cdet"/></svg>识别柱大样</div>
        <div class="flex items-center h-[23px]"><svg class="w-4 h-4 mr-[3px]"><use href="#r-col"/></svg>识别柱</div>
      </div>
      <div class="w-[99px]">
        <div class="flex items-center h-[23px]"><svg class="w-4 h-4 mr-[3px]"><use href="#r-chk1"/></svg>校核柱大样</div>
        <div class="flex items-center h-[23px]"><svg class="w-4 h-4 mr-[3px]"><use href="#r-chk2"/></svg>校核柱图元</div>
        <div class="flex items-center h-[23px]"><svg class="w-4 h-4 mr-[3px]"><use href="#r-edge"/></svg>生成柱边线<svg class="w-[6px] h-[4px] ml-[6px]"><use href="#car"/></svg></div>
      </div>
      <div class="flex items-center h-[23px]"><svg class="w-4 h-4"><use href="#r-cfind"/></svg></div>
    </div>
    <div class="mt-[6px] text-center pl-[3px]">识别柱</div>
  </div>

  <div class="w-[78px] flex flex-col border-r border-[#d8d8d8] my-[2px]">
    <div class="flex flex-col items-center h-[70px] pt-[4px] pr-[15px]">
      <svg class="w-[30px] h-[32px]"><use href="#r-smart"/></svg>
      <span class="mt-[4px]">智能布置</span>
      <svg class="w-[6px] h-[4px] mt-[3px]"><use href="#car"/></svg>
    </div>
    <div class="mt-[6px] text-center">智能布置</div>
  </div>

  <div class="w-[90px] flex flex-col border-r border-[#d8d8d8] my-[2px]">
    <div class="flex h-[70px] pl-[8px]">
      <div class="w-[33px]">
        <div class="flex items-center h-[23px]"><svg class="w-4 h-4"><use href="#r-sec"/></svg></div>
        <div class="flex items-center h-[23px]"><svg class="w-4 h-4"><use href="#r-mesh"/></svg></div>
        <div class="flex items-center h-[23px]"><svg class="w-4 h-4"><use href="#r-brace"/></svg><svg class="w-[6px] h-[4px] ml-[4px]"><use href="#car"/></svg></div>
      </div>
      <div class="flex items-center h-[23px]"><svg class="w-4 h-4"><use href="#r-brush"/></svg></div>
    </div>
    <div class="mt-[6px] text-center">柱二次编辑</div>
  </div>
</section>

<!-- combo row -->
<section class="flex items-center h-[26px] bg-[#f0f0f0] pl-[3px] pb-[1px] gap-[5px] text-[13px]">
  <div class="w-[97px] h-[20px] flex items-center justify-between px-[3px] bg-white border border-[#ddd] rounded-sm">首层<svg class="w-[6px] h-[4px] mr-[2px]"><use href="#car"/></svg></div>
  <div class="w-[97px] h-[20px] flex items-center justify-between px-[3px] bg-white border border-[#ddd] rounded-sm">柱<svg class="w-[6px] h-[4px] mr-[2px]"><use href="#car"/></svg></div>
  <div class="w-[97px] h-[20px] flex items-center justify-between px-[3px] bg-white border border-[#ddd] rounded-sm">柱<svg class="w-[6px] h-[4px] mr-[2px]"><use href="#car"/></svg></div>
  <div class="w-[98px] h-[20px] flex items-center justify-between px-[3px] bg-white border border-[#ddd] rounded-sm">2YKZ2<svg class="w-[6px] h-[4px] mr-[2px]"><use href="#car"/></svg></div>
</section>

<!-- main -->
<main class="flex h-[656px] bg-[#f8f8f8]">
  <!-- nav -->
  <aside class="relative w-[166px] h-[654px] bg-white border-r border-b border-[#d8d8d8]">
    <div class="h-[12px] bg-[#e8e8e8] flex justify-end items-center pr-[4px]"><svg class="w-2 h-2"><use href="#x"/></svg></div>
    <div class="h-[21px] bg-[#f0f0f0] border-y border-[#e0e0e0] flex items-center pl-[9px] text-[#9a9a9a]">导航栏</div>
    <div class="flex items-center h-[28px] border-b border-[#ddd] pl-[8px]">
      <svg class="w-[12px] h-[12px] mr-[10px]"><use href="#n-plus"/></svg>
      <span class="flex items-center justify-center w-[24px] h-[22px] rounded bg-[#c3d9f1] mr-[4px]"><svg class="w-4 h-4"><use href="#n-list"/></svg></span>
      <span class="flex items-center justify-center w-[24px] h-[22px] rounded bg-[#c3d9f1]"><svg class="w-4 h-4"><use href="#n-card"/></svg></span>
    </div>
    <div class="flex flex-col gap-[3px] pt-[5px] w-[150px] pl-[1px] overflow-hidden whitespace-nowrap">
      <div class="flex items-center h-[25px] shrink-0 pl-[17px]"><svg class="w-[18px] h-[18px] mr-[14px] shrink-0"><use href="#n-axis"/></svg>轴网(J)</div>
      <div class="flex items-center h-[25px] shrink-0 pl-[17px]"><svg class="w-[18px] h-[18px] mr-[14px] shrink-0"><use href="#n-aux"/></svg>辅助轴线(O)</div>
      <div class="flex items-center h-[25px] shrink-0 pl-[3px] bg-[#ececec]">柱</div>
      <div class="flex items-center h-[25px] shrink-0 pl-[17px] bg-[#d0e5fb]"><svg class="w-[18px] h-[18px] mr-[14px] shrink-0"><use href="#n-col"/></svg>柱(Z)</div>
      <div class="flex items-center h-[25px] shrink-0 pl-[17px]"><svg class="w-[18px] h-[18px] mr-[14px] shrink-0"><use href="#n-cons"/></svg>构造柱(Z)</div>
      <div class="flex items-center h-[25px] shrink-0 pl-[17px]"><svg class="w-[18px] h-[18px] mr-[14px] shrink-0"><use href="#n-brick"/></svg>砌体柱(Z)</div>
      <div class="flex items-center h-[25px] shrink-0 pl-[17px]"><svg class="w-[18px] h-[18px] mr-[14px] shrink-0"><use href="#n-edge"/></svg>约束边缘非阴影区(</div>
      <div class="flex items-center h-[25px] shrink-0 pl-[3px] bg-[#ececec]">墙</div>
      <div class="flex items-center h-[25px] shrink-0 pl-[3px] bg-[#ececec]">门窗洞</div>
      <div class="flex items-center h-[25px] shrink-0 pl-[3px] bg-[#ececec]">梁</div>
      <div class="flex items-center h-[25px] shrink-0 pl-[3px] bg-[#ececec]">板</div>
      <div class="flex items-center h-[25px] shrink-0 pl-[17px]"><svg class="w-[18px] h-[18px] mr-[14px] shrink-0"><use href="#n-slab"/></svg>现浇板(B)</div>
      <div class="flex items-center h-[25px] shrink-0 pl-[17px]"><svg class="w-[18px] h-[18px] mr-[14px] shrink-0"><use href="#n-spiral"/></svg>螺旋板(B)</div>
      <div class="flex items-center h-[25px] shrink-0 pl-[17px]"><svg class="w-[18px] h-[18px] mr-[14px] shrink-0"><use href="#n-ramp"/></svg>坡道(PD)</div>
      <div class="flex items-center h-[25px] shrink-0 pl-[17px]"><svg class="w-[18px] h-[18px] mr-[14px] shrink-0"><use href="#n-col"/></svg>柱帽(V)</div>
      <div class="flex items-center h-[25px] shrink-0 pl-[17px]"><svg class="w-[18px] h-[18px] mr-[14px] shrink-0"><use href="#n-hole"/></svg>板洞(N)</div>
      <div class="flex items-center h-[25px] shrink-0 pl-[17px]"><svg class="w-[18px] h-[18px] mr-[14px] shrink-0"><use href="#n-rein"/></svg>板受力筋(S)</div>
      <div class="flex items-center h-[25px] shrink-0 pl-[17px]"><svg class="w-[18px] h-[18px] mr-[14px] shrink-0"><use href="#n-neg"/></svg>板负筋(F)</div>
      <div class="flex items-center h-[25px] shrink-0 pl-[17px]"><svg class="w-[18px] h-[18px] mr-[14px] shrink-0"><use href="#n-band"/></svg>楼层板带(H)</div>
      <div class="flex items-center h-[25px] shrink-0 pl-[17px]"><svg class="w-[18px] h-[18px] mr-[14px] shrink-0"><use href="#n-hau"/></svg>板加腋(B)</div>
      <div class="flex items-center h-[25px] shrink-0 pl-[3px] bg-[#ececec]">装配式</div>
    </div>
    <span class="absolute left-[40px] top-[375px] w-[6px] h-[6px] rounded-full bg-[#f00000]"></span>
    <span class="absolute left-[40px] top-[431px] w-[6px] h-[6px] rounded-full bg-[#f00000]"></span>
    <span class="absolute left-[153px] top-[109px] w-[8px] h-[317px] rounded-full bg-[#c8c8c8]"></span>
  </aside>

  <!-- middle -->
  <div class="flex flex-col w-[314px] ml-[3px] gap-[4px]">
    <section class="h-[286px] bg-white border border-t-0 border-[#d8d8d8]">
      <div class="h-[12px] bg-[#e8e8e8] flex justify-end items-center pr-[4px]"><svg class="w-2 h-2"><use href="#x"/></svg></div>
      <div class="flex h-[22px] bg-[#f0f0f0] border-b border-[#ddd]">
        <span class="w-[65px] flex items-center justify-center border border-[#ddd] font-bold bg-[#f0f0f0] pt-[1px]">构件列表</span>
        <span class="w-[65px] flex items-center justify-center border border-[#ccc] bg-[#e0e0e0] text-[#999] pt-[1px]">图纸管理</span>
      </div>
      <div class="flex items-center h-[29px] pt-[3px] border-b border-[#e4e4e4] pl-[4px] whitespace-nowrap">
        <svg class="w-4 h-4 mr-[4px]"><use href="#q-new"/></svg>新建<svg class="w-[6px] h-[4px] ml-[7px] mr-[9px]"><use href="#car"/></svg>
        <svg class="w-4 h-4 mr-[5px]"><use href="#r-copy"/></svg>复制
        <span class="flex items-center h-[22px] ml-[8px] px-[5px] rounded bg-[#d6e8fb]"><svg class="w-4 h-4 mr-[3px]"><use href="#r-del"/></svg>删除</span>
        <svg class="w-4 h-4 ml-[8px] mr-[4px]"><use href="#r-lcopy2"/></svg>层间复制
        <span class="ml-auto mr-[1px] w-[12px] h-[20px] rounded border border-[#e8e8e8] text-[8px] leading-[18px] text-center text-[#555]">▸▸</span>
      </div>
      <div class="flex items-center justify-between h-[19px] border-b border-[#e4e4e4] pl-[2px] pr-[7px] text-[#b0b0b0]">搜索构件...<svg class="w-[11px] h-[11px]"><use href="#mag"/></svg></div>
      <div class="pt-[2px] text-[#333]">
        <div class="flex items-center h-[24px] pl-[13px]"><svg class="w-[6px] h-[4px] mr-[4px]"><use href="#car"/></svg>柱</div>
        <div class="flex items-center h-[24px] pl-[33px]"><svg class="w-[6px] h-[4px] mr-[4px]"><use href="#car"/></svg>框架柱</div>
        <div class="flex items-center h-[24px] pl-[63px]">2YKZ1&nbsp;&nbsp;&lt;1&gt;</div>
        <div class="flex items-center h-[24px] pl-[60px]"><span class="h-[21px] leading-[21px] pl-[3px] w-[72px] rounded bg-[#c3d9f1]">2YKZ2&nbsp;&nbsp;&lt;1&gt;</span></div>
      </div>
    </section>

    <section class="relative h-[364px] bg-white border border-t-0 border-[#d8d8d8]">
      <div class="h-[12px] bg-[#e8e8e8] flex justify-end items-center pr-[4px]"><svg class="w-2 h-2"><use href="#x"/></svg></div>
      <div class="flex h-[22px] bg-[#f0f0f0] border-b border-[#ddd]">
        <span class="w-[65px] flex items-center justify-center border border-[#ddd] font-bold pt-[1px]">属性列表</span>
        <span class="w-[65px] flex items-center justify-center border border-[#ccc] bg-[#e0e0e0] text-[#999] pt-[1px]">图层管理</span>
      </div>
      <div class="w-[296px] h-[300px] overflow-hidden whitespace-nowrap">
        <div class="flex h-[22px] border-b border-[#ddd]">
          <span class="w-[21px] border-r border-[#ddd]"></span>
          <span class="w-[143px] flex items-center justify-center border-r border-[#ddd] pt-[1px]">属性名称</span>
          <span class="w-[132px] flex items-center justify-center bg-[#7eb8f7] text-white pt-[1px]">属性值</span>
        </div>
        <div class="flex h-[21px] leading-[21px] border-b border-[#ddd]"><span class="w-[21px] bg-[#f0f0f0] border-r border-[#ddd] text-center">21</span><span class="w-[143px] pl-[3px] border-r border-[#ddd] text-[#1a6fe8]">截面面积(m²)</span><span class="pl-[3px] text-[#999]">0.36</span></div>
        <div class="flex h-[21px] leading-[21px] border-b border-[#ddd]"><span class="w-[21px] bg-[#f0f0f0] border-r border-[#ddd] text-center">22</span><span class="w-[143px] pl-[3px] border-r border-[#ddd] text-[#1a6fe8]">截面周长(m)</span><span class="pl-[3px] text-[#999]">2.4</span></div>
        <div class="flex h-[21px] leading-[21px] border-b border-[#ddd]"><span class="w-[21px] bg-[#f0f0f0] border-r border-[#ddd] text-center">23</span><span class="w-[143px] pl-[3px] border-r border-[#ddd]">顶标高(m)</span><span class="pl-[3px]">层顶标高(3.18)</span></div>
        <div class="flex h-[21px] leading-[21px] border-b border-[#ddd]"><span class="w-[21px] bg-[#f0f0f0] border-r border-[#ddd] text-center">24</span><span class="w-[143px] pl-[3px] border-r border-[#ddd]">底标高(m)</span><span class="pl-[3px]">层底标高(0)</span></div>
        <div class="flex h-[21px] leading-[21px] border-b border-[#ddd]"><span class="w-[21px] bg-[#f0f0f0] border-r border-[#ddd] text-center">25</span><span class="w-[143px] pl-[3px] border-r border-[#ddd]">备注</span><span></span></div>
        <div class="flex h-[21px] leading-[21px] border-b border-[#ddd]"><span class="w-[21px] bg-[#f0f0f0] border-r border-[#ddd] text-center">26</span><span class="w-[143px] pl-[2px] border-r border-[#ddd] flex items-center"><span class="w-[13px] h-[13px] border border-[#777] rounded-[2px] text-[10px] leading-[10px] text-center mr-[5px]">−</span>钢筋业务属性</span><span></span></div>
        <div class="flex h-[21px] leading-[21px] border-b border-[#ddd]"><span class="w-[21px] bg-[#f0f0f0] border-r border-[#ddd] text-center">27</span><span class="w-[143px] pl-[8px] border-r border-[#ddd] flex items-center"><span class="w-[16px] h-[21px] border-l border-[#ddd] relative mr-[7px] after:absolute after:left-0 after:top-[10px] after:w-[16px] after:h-px after:bg-[#ddd]"></span><span class="text-[#1a6fe8]">其它钢筋</span></span><span></span></div>
        <div class="flex h-[21px] leading-[21px] border-b border-[#ddd]"><span class="w-[21px] bg-[#f0f0f0] border-r border-[#ddd] text-center">28</span><span class="w-[143px] pl-[8px] border-r border-[#ddd] flex items-center"><span class="w-[16px] h-[21px] border-l border-[#ddd] relative mr-[7px] after:absolute after:left-0 after:top-[10px] after:w-[16px] after:h-px after:bg-[#ddd]"></span><span class="text-[#1a6fe8]">其它箍筋</span></span><span></span></div>
        <div class="flex h-[21px] leading-[21px] border-b border-[#ddd]"><span class="w-[21px] bg-[#f0f0f0] border-r border-[#ddd] text-center">29</span><span class="w-[143px] pl-[8px] border-r border-[#ddd] flex items-center"><span class="w-[16px] h-[21px] border-l border-[#ddd] relative mr-[7px] after:absolute after:left-0 after:top-[10px] after:w-[16px] after:h-px after:bg-[#ddd]"></span>抗震等级</span><span class="pl-[3px]">(二级抗震)</span></div>
        <div class="flex h-[21px] leading-[21px] border-b border-[#ddd]"><span class="w-[21px] bg-[#f0f0f0] border-r border-[#ddd] text-center">30</span><span class="w-[143px] pl-[8px] border-r border-[#ddd] flex items-center"><span class="w-[16px] h-[21px] border-l border-[#ddd] relative mr-[7px] after:absolute after:left-0 after:top-[10px] after:w-[16px] after:h-px after:bg-[#ddd]"></span>锚固搭接</span><span class="pl-[3px]">按默认锚固搭接计算</span></div>
        <div class="flex h-[21px] leading-[21px] border-b border-[#ddd]"><span class="w-[21px] bg-[#7eb8f7] text-white font-bold border-r border-[#ddd] text-center">31</span><span class="w-[143px] pl-[8px] border-r border-[#ddd] flex items-center"><span class="w-[16px] h-[21px] border-l border-[#ddd] relative mr-[7px] after:absolute after:left-0 after:top-[10px] after:w-[16px] after:h-px after:bg-[#ddd]"></span>计算设置</span><span class="w-[132px] pl-[2px] border-2 border-[#6a6a6a] leading-[17px]">按设定计算设置计算</span></div>
        <div class="flex h-[21px] leading-[21px] border-b border-[#ddd]"><span class="w-[21px] bg-[#f0f0f0] border-r border-[#ddd] text-center">32</span><span class="w-[143px] pl-[8px] border-r border-[#ddd] flex items-center"><span class="w-[16px] h-[21px] border-l border-[#ddd] relative mr-[7px] after:absolute after:left-0 after:top-[10px] after:w-[16px] after:h-px after:bg-[#ddd]"></span>节点设置</span><span class="pl-[3px]">按默认节点设置计算</span></div>
        <div class="flex h-[21px] leading-[21px] border-b border-[#ddd]"><span class="w-[21px] bg-[#f0f0f0] border-r border-[#ddd] text-center">33</span><span class="w-[143px] pl-[8px] border-r border-[#ddd] flex items-center"><span class="w-[16px] h-[21px] border-l border-[#ddd] relative mr-[7px] after:absolute after:left-0 after:top-[10px] after:w-[16px] after:h-px after:bg-[#ddd]"></span>搭接设置</span><span class="pl-[3px]">按默认搭接设置计算</span></div>
      </div>
      <span class="absolute left-[301px] top-[170px] w-[8px] h-[77px] rounded-full bg-[#c8c8c8]"></span>
      <div class="border-t border-[#e4e4e4] pt-[3px] pl-[5px]"><button class="w-[80px] h-[23px] border border-[#d0d0d0] rounded text-center">截面编辑</button></div>
    </section>
  </div>

  <!-- right -->
  <div class="relative w-[953px] ml-[4px]">
    <div class="relative h-[327px] bg-black overflow-hidden">
      <svg class="w-[953px] h-[327px]" viewBox="0 0 953 327" fill="none">
        <g stroke="#0c8f0c" stroke-width="1.200">
          <path d="M91 18.500h52M91 21.500h52M277 18.500h52M277 21.500h52M492 18.500h90M492 21.500h90M110 263.500h66M110 266.500h66M273 263.500h66M273 266.500h66"/>
        </g>
        <g fill="#fff" font-family="Noto Sans CJK SC" font-size="8" font-weight="700">
          <text x="94" y="13">A截面</text>
          <text x="280" y="13">B截面</text>
          <text x="492" y="13" font-size="10">E-截面图</text>
          <text x="113" y="255" font-size="10">C-截面图</text>
          <text x="277" y="255" font-size="10">D-截面图</text>
          <text x="5" y="103">截面</text>
          <text x="4" y="281">截面</text>
          <text x="54" y="197">截面</text>
        </g>
        <path d="M14 107v10M14 123v3M14 268v-9M14 253v-3M45 192h9" stroke="#fff"/>
        <path d="M12 121h4l-2 4zM14 250l-2 4h4zM36 192l4-2v4z" fill="#fff"/>
        <path d="M17 174h17M40 174h28M74 174h6M85 174h110M209 174h14M228 174h5M238 174h100M339 174h20" stroke="#d80000" stroke-width="1.200"/>
        <path d="M141 101v40M141 145v90M304 101v20M304 126v4M304 135v100" stroke="#d80000" stroke-width="1.200" stroke-dasharray="14 3 3 3"/>
        <!-- left partial section -->
        <g stroke="#0fc40f" stroke-width="1"><path d="M3 142v65M17 142v65M0 143h18M0 147h18M0 201h18M0 205h18M0 128.500h7"/></g>
        <g fill="#fff" font-family="Liberation Mono" font-size="7"><text transform="translate(15 146) rotate(-90)">37</text><text transform="translate(14 182) rotate(-90)">526</text><text transform="translate(14 214) rotate(-90)">37</text></g>
        <path d="M30 141h8v-3h7v13h-6v-3h-9zM35 141v7" stroke="#fff" stroke-width="1"/>
        <!-- section C -->
        <rect x="110.500" y="143.500" width="62" height="61" stroke="#f08a00" stroke-width="1.200"/>
        <g stroke="#12e012" stroke-width="1.500"><rect x="113" y="146" width="57" height="56"/><path d="M131 146v56M152 146v56M113 163.500h57M113 185h57"/></g>
        <path d="M145 156l6-7M146 158l6-6M160 179l7-3M163 185l4-6M160 199l7-3M163 202l4-6" stroke="#12e012" stroke-width="1.500"/>
        <g stroke="#d85a90" stroke-width="1"><circle cx="116" cy="149" r="2.500"/><circle cx="134" cy="149" r="2.500"/><circle cx="148" cy="149" r="2.500"/><circle cx="167" cy="149" r="2.500"/><circle cx="116" cy="167" r="2.500"/><circle cx="167" cy="167" r="2.500"/><circle cx="116" cy="182" r="2.500"/><circle cx="167" cy="182" r="2.500"/><circle cx="116" cy="199" r="2.500"/><circle cx="134" cy="199" r="2.500"/><circle cx="148" cy="199" r="2.500"/><circle cx="167" cy="199" r="2.500"/></g>
        <g stroke="#12d812" stroke-width="1"><path d="M110 114h63M111 112v28M113 112v28M170 112v30M172 112v30M109 127h94M130 127v15M152 127v15M166 130v22M175 144h35M175 149h35M175 163h22M175 185h22M195 144v61M209 144v61M175 192h10M182 192v13"/></g>
        <path d="M175 204h35" stroke="#12b012" stroke-width="3"/>
        <g fill="#fff" font-family="Liberation Mono" font-size="7.500">
          <text x="102" y="112">20</text><text x="135" y="112">560</text><text x="172" y="112">20</text>
          <text x="114" y="125">195</text><text x="135" y="125">210</text><text x="156" y="125">195</text>
          <text x="180" y="130" font-size="6.500">4¢T22L</text><text x="132" y="141" font-size="6.500">2¢T22L</text>
          <text transform="translate(205 143) rotate(-90)">20</text><text transform="translate(193 160) rotate(-90)">195</text>
          <text transform="translate(180 182) rotate(-90)" font-size="6.500">2¢T22L</text><text transform="translate(192 181) rotate(-90)">210</text>
          <text transform="translate(207 181) rotate(-90)">560</text><text transform="translate(192 202) rotate(-90)">195</text>
          <text transform="translate(180 205) rotate(-90)">120</text><text transform="translate(206 214) rotate(-90)">20</text>
        </g>
        <!-- section D -->
        <g stroke="#1e78ff" stroke-width="1.200"><path d="M275 152h59M275 167h59M275 181h59M275 195h59M280 144v60M287 144v60M301 144v60M320 144v60M331 144v60"/></g>
        <g stroke="#9a4438" stroke-width="1"><path d="M279 150l20 50M282 150l22 50M298 150l36 24M301 150l33 20M279 170l20 32M282 170l22 32M305 165l18 36M308 165l19 36"/></g>
        <g stroke="#e0608f" stroke-width="1"><circle cx="279" cy="149" r="2.800"/><circle cx="297" cy="149" r="2.800"/><circle cx="311" cy="149" r="2.800"/><circle cx="330" cy="149" r="2.800"/><circle cx="279" cy="167" r="2.800"/><circle cx="330" cy="167" r="2.800"/><circle cx="279" cy="182" r="2.800"/><circle cx="330" cy="182" r="2.800"/><circle cx="279" cy="199" r="2.800"/><circle cx="297" cy="199" r="2.800"/><circle cx="311" cy="199" r="2.800"/><circle cx="330" cy="199" r="2.800"/></g>
        <rect x="273.500" y="143.500" width="62" height="61" rx="1" stroke="#d8a080" stroke-width="1.400"/>
        <path d="M304 174v28" stroke="#e00000" stroke-width="2"/><path d="M290 174h26" stroke="#e00000"/>
        <!-- axes -->
        <path d="M50 277v-20" stroke="#00e000" stroke-width="5"/><path d="M45 258l5-14 5 14z" fill="#00e000"/>
        <path d="M50 277h20" stroke="#f00000" stroke-width="5"/><path d="M68 272l12 5-12 5z" fill="#f00000"/>
        <circle cx="50" cy="277" r="5.500" fill="#0000c0"/>
        <path d="M83 273l7 12M90 273l-7 12" stroke="#f00000" stroke-width="1.200"/>
        <path d="M46 236l4 6 4-6M50 242v5" stroke="#00e000" stroke-width="1.200"/>
        <path d="M766 327V271.500h187" stroke="#909090" stroke-width="1.500"/>
      </svg>
    </div>
    <!-- splitter -->
    <div class="absolute left-[456px] top-[327px] w-[71px] h-[4px] bg-[#777]"></div>

    <section class="mt-[4px] h-[323px] bg-white border-b border-[#d8d8d8]">
      <div class="h-[12px] bg-[#e8e8e8] flex justify-end items-center pr-[6px]"><svg class="w-2 h-2"><use href="#x"/></svg></div>
      <div class="h-[22px] bg-[#f0f0f0] border-y border-[#e4e4e4] flex items-center pl-[9px] pt-[1px] text-[#999]">编辑钢筋</div>
      <div class="flex items-center h-[27px] pt-[2px] border-b border-[#e4e4e4] pl-[8px] whitespace-nowrap">
        <svg class="w-[11px] h-[13px] mr-[23px]"><use href="#b-first"/></svg>
        <svg class="w-[11px] h-[13px] mr-[20px]"><use href="#b-prev"/></svg>
        <svg class="w-[11px] h-[13px] mr-[21px]"><use href="#b-next"/></svg>
        <svg class="w-[11px] h-[13px] mr-[18px]"><use href="#b-last"/></svg>
        <svg class="w-[15px] h-[15px] mr-[13px]"><use href="#b-up"/></svg>
        <svg class="w-[15px] h-[15px] mr-[13px]"><use href="#b-dn"/></svg>
        <svg class="w-[15px] h-[15px] mr-[4px]"><use href="#b-ins"/></svg>插入
        <svg class="w-[15px] h-[15px] ml-[12px] mr-[5px]"><use href="#r-del"/></svg>删除
        <svg class="w-[15px] h-[15px] ml-[11px] mr-[6px]"><use href="#b-scale"/></svg>缩尺配筋
        <svg class="w-[15px] h-[15px] ml-[12px] mr-[5px]"><use href="#b-info"/></svg>钢筋信息
        <svg class="w-[15px] h-[15px] ml-[12px] mr-[5px]"><use href="#b-lib"/></svg>钢筋图库
        <span class="ml-[12px]">其他</span><svg class="w-[6px] h-[4px] ml-[8px] mr-[9px]"><use href="#car"/></svg>
        <span>单构件钢筋总重(kg)：219.606</span>
      </div>

      <!-- rebar grid -->
      <div class="relative h-[248px] overflow-hidden">
        <table class="table-fixed border-collapse w-[938px] text-[11px] font-['Liberation_Mono','Noto_Sans_CJK_SC',monospace] tracking-[-0.6px] text-[#111]">
          <colgroup>
            <col class="w-[7px]"><col class="w-[74px]"><col class="w-[56px]"><col class="w-[35px]"><col class="w-[34px]"><col class="w-[215px]"><col class="w-[166px]"><col class="w-[170px]"><col class="w-[37px]"><col class="w-[39px]"><col class="w-[49px]"><col class="w-[56px]">
          </colgroup>
          <thead class="font-['Noto_Sans','Noto_Sans_CJK_SC',sans-serif] text-xs font-normal tracking-normal text-[#3f3f3f]">
            <tr class="h-[21px]">
              <th class="font-normal bg-white border border-[#ddd]"></th>
              <th class="font-normal bg-[#7eb8f7] text-white border border-[#ddd]">筋号</th>
              <th class="font-normal bg-white border border-[#ddd] whitespace-nowrap">直径(mm)</th>
              <th class="font-normal bg-white border border-[#ddd]">级别</th>
              <th class="font-normal bg-white border border-[#ddd]">图号</th>
              <th class="font-normal bg-white border border-[#ddd]">图形</th>
              <th class="font-normal bg-white border border-[#ddd]">计算公式</th>
              <th class="font-normal bg-white border border-[#ddd]">公式描述</th>
              <th class="font-normal bg-white border border-[#ddd]">长度</th>
              <th class="font-normal bg-white border border-[#ddd]">根数</th>
              <th class="font-normal bg-white border border-[#ddd]">搭接</th>
              <th class="font-normal bg-white border border-[#ddd] whitespace-nowrap">损耗(%)</th>
            </tr>
          </thead>
          <tbody class="bg-[#c1dee0]">
            <tr class="h-[46px]">
              <td class="bg-[#7eb8f7] text-white border border-[#d8d8d8] p-0 text-center font-bold overflow-visible">1</td>
              <td class="border-2 border-[#6aa8f0] pl-[3px] whitespace-nowrap text-xs tracking-normal">角筋.1</td>
              <td class="border border-[#d8d8d8] pl-[2px]">22</td><td class="border border-[#d8d8d8] pl-[5px]"><svg class="w-[10px] h-[9px]"><use href="#rb"/></svg></td><td class="border border-[#d8d8d8] pl-[4px]">1</td>
              <td class="border border-[#d8d8d8] p-0 text-[#f00] text-xs tracking-[-0.2px]"><div class="ml-[18px] mr-[4px] pr-[-1px] text-center border-b-2 border-black pl-[8px]">3847</div></td>
              <td class="border border-[#d8d8d8] pl-[3px] whitespace-nowrap">3180+max(4000/6,600,500)</td>
              <td class="border border-[#d8d8d8] pl-[3px] text-xs tracking-normal font-['Noto_Sans','Noto_Sans_CJK_SC',sans-serif]">层高+上层露出长度</td>
              <td class="border border-[#d8d8d8] pl-[3px]">3847</td><td class="border border-[#d8d8d8] pl-[3px]">4</td><td class="border border-[#d8d8d8] pl-[3px]">0</td><td class="border border-[#d8d8d8] pl-[3px]">0</td>
            </tr>
            <tr class="h-[46px]">
              <td class="bg-[#f0f0f0] border border-[#d8d8d8] p-0 text-center">2</td>
              <td class="border border-[#d8d8d8] pl-[3px] whitespace-nowrap">B边纵筋.1</td>
              <td class="border border-[#d8d8d8] pl-[2px]">22</td><td class="border border-[#d8d8d8] pl-[5px]"><svg class="w-[10px] h-[9px]"><use href="#rb"/></svg></td><td class="border border-[#d8d8d8] pl-[4px]">1</td>
              <td class="border border-[#d8d8d8] p-0 text-[#f00] text-xs tracking-[-0.2px]"><div class="ml-[18px] mr-[4px] text-center border-b-2 border-black pl-[8px]">3847</div></td>
              <td class="border border-[#d8d8d8] pl-[3px] whitespace-nowrap">3180+max(4000/6,600,500)</td>
              <td class="border border-[#d8d8d8] pl-[3px] text-xs tracking-normal font-['Noto_Sans','Noto_Sans_CJK_SC',sans-serif]">层高+上层露出长度</td>
              <td class="border border-[#d8d8d8] pl-[3px]">3847</td><td class="border border-[#d8d8d8] pl-[3px]">4</td><td class="border border-[#d8d8d8] pl-[3px]">0</td><td class="border border-[#d8d8d8] pl-[3px]">0</td>
            </tr>
            <tr class="h-[46px]">
              <td class="bg-[#f0f0f0] border border-[#d8d8d8] p-0 text-center">3</td>
              <td class="border border-[#d8d8d8] pl-[3px] whitespace-nowrap">H边纵筋.1</td>
              <td class="border border-[#d8d8d8] pl-[2px]">22</td><td class="border border-[#d8d8d8] pl-[5px]"><svg class="w-[10px] h-[9px]"><use href="#rb"/></svg></td><td class="border border-[#d8d8d8] pl-[4px]">1</td>
              <td class="border border-[#d8d8d8] p-0 text-[#f00] text-xs tracking-[-0.2px]"><div class="ml-[18px] mr-[4px] text-center border-b-2 border-black pl-[8px]">3847</div></td>
              <td class="border border-[#d8d8d8] pl-[3px] whitespace-nowrap">3180+max(4000/6,600,500)</td>
              <td class="border border-[#d8d8d8] pl-[3px] text-xs tracking-normal font-['Noto_Sans','Noto_Sans_CJK_SC',sans-serif]">层高+上层露出长度</td>
              <td class="border border-[#d8d8d8] pl-[3px]">3847</td><td class="border border-[#d8d8d8] pl-[3px]">4</td><td class="border border-[#d8d8d8] pl-[3px]">0</td><td class="border border-[#d8d8d8] pl-[3px]">0</td>
            </tr>
            <tr class="h-[46px]">
              <td class="bg-[#f0f0f0] border border-[#d8d8d8] p-0 text-center">4</td>
              <td class="border border-[#d8d8d8] pl-[3px] whitespace-nowrap">箍筋.1</td>
              <td class="border border-[#d8d8d8] pl-[2px]">8</td><td class="border border-[#d8d8d8] pl-[5px]"><svg class="w-[10px] h-[9px]"><use href="#rb"/></svg></td><td class="border border-[#d8d8d8] pl-[4px]">195</td>
              <td class="border border-[#d8d8d8] p-0"><div class="flex items-center pl-[55px] gap-[20px]"><span class="font-['Liberation_Serif',serif] text-[19px] tracking-normal">560</span><div class="relative w-[62px] h-[39px] border-2 border-black rounded-[2px] font-['Liberation_Sans',sans-serif] text-[19px] tracking-normal text-[#f00]"><span class="absolute left-[1px] top-[12px]">560</span><svg class="absolute right-0 top-0 w-[26px] h-[21px]" viewBox="0 0 26 21" stroke="#000" stroke-width="1.500"><path d="M3 11L16 2M14 20L24 7"/></svg></div></div></td>
              <td class="border border-[#d8d8d8] pl-[3px] whitespace-nowrap">2*(560+560)+2*(12.89*d)</td>
              <td class="border border-[#d8d8d8]"></td>
              <td class="border border-[#d8d8d8] pl-[3px]">2446</td><td class="border border-[#d8d8d8] pl-[3px]">33</td><td class="border border-[#d8d8d8] pl-[3px]">0</td><td class="border border-[#d8d8d8] pl-[3px]">0</td>
            </tr>
            <tr class="h-[46px]">
              <td class="bg-[#f0f0f0] border border-[#d8d8d8] p-0 text-center">5</td>
              <td class="border border-[#d8d8d8] pl-[3px] whitespace-nowrap">箍筋.2</td>
              <td class="border border-[#d8d8d8] pl-[2px]">8</td><td class="border border-[#d8d8d8] pl-[5px]"><svg class="w-[10px] h-[9px]"><use href="#rb"/></svg></td><td class="border border-[#d8d8d8] pl-[4px]">195</td>
              <td class="border border-[#d8d8d8] p-0"><div class="flex items-center pl-[55px] gap-[20px]"><span class="font-['Liberation_Serif',serif] text-[19px] tracking-normal">299</span><div class="relative w-[62px] h-[39px] border-2 border-black rounded-[2px] font-['Liberation_Sans',sans-serif] text-[19px] tracking-normal text-[#f00]"><span class="absolute left-[1px] top-[12px]">560</span><svg class="absolute right-0 top-0 w-[26px] h-[21px]" viewBox="0 0 26 21" stroke="#000" stroke-width="1.500"><path d="M3 11L16 2M14 20L24 7"/></svg></div></div></td>
              <td class="border border-[#d8d8d8] pl-[3px] whitespace-nowrap">2*(560+299)+2*(12.89*d)</td>
              <td class="border border-[#d8d8d8]"></td>
              <td class="border border-[#d8d8d8] pl-[3px]">1924</td><td class="border border-[#d8d8d8] pl-[3px]">66</td><td class="border border-[#d8d8d8] pl-[3px]">0</td><td class="border border-[#d8d8d8] pl-[3px]">0</td>
            </tr>
          </tbody>
        </table>
        <!-- annotation overlay -->
        <div class="absolute left-[421px] top-[21px] w-[167px] h-[133px] border-[3px] border-[#ff2010] rounded-[3px]"></div>
        <svg class="absolute left-[520px] top-[25px] w-[70px] h-[150px]" viewBox="0 0 70 150"><path d="M18 25l12-1-2 5 21 9-24-6 1 4zM13 72l15-2-3 5 25 8-27-4 1 5zM26 119h14l-4 3 20 17-23-14-2 3z" fill="#ff2010"/></svg>
        <span class="absolute left-[941px] top-[14px] w-[8px] h-[183px] rounded-full bg-[#c8c8c8]"></span>
      </div>
      <!-- h scroll -->
      <div class="relative flex items-center h-[14px]">
        <span class="absolute left-[3px] top-[3px] border-y-[4px] border-r-[4px] border-y-transparent border-r-[#50586a]"></span>
        <span class="absolute left-[15px] top-[2px] w-[568px] h-[8px] rounded-full bg-[#c8c8c8]"></span>
        <span class="absolute left-[929px] top-[3px] border-y-[4px] border-l-[4px] border-y-transparent border-l-[#50586a]"></span>
      </div>
    </section>

    <!-- floating view bar -->
    <div class="absolute left-[920px] top-0 w-[33px] h-[245px] bg-white rounded-l-[3px] flex flex-col items-center pt-[13px] pr-[1px]">
      <svg class="w-[20px] h-[20px]"><use href="#f-globe"/></svg>
      <svg class="w-[20px] h-[20px] mt-[9px]"><use href="#f-3d"/></svg>
      <svg class="w-[20px] h-[20px] mt-[9px]"><use href="#f-top"/></svg>
      <svg class="w-[7px] h-[4px] mt-[8px]"><use href="#car"/></svg>
      <svg class="w-[20px] h-[20px] mt-[7px]"><use href="#f-cube"/></svg>
      <svg class="w-[7px] h-[4px] mt-[8px]"><use href="#car"/></svg>
      <svg class="w-[20px] h-[20px] mt-[7px]"><use href="#f-corner"/></svg>
      <svg class="w-[20px] h-[20px] mt-[9px]"><use href="#f-dash"/></svg>
      <div class="w-[24px] h-px bg-[#999] mt-[7px]"></div>
      <svg class="w-[20px] h-[20px] mt-[6px]"><use href="#f-eye"/></svg>
    </div>
    <span class="absolute left-[949px] top-[114px] w-[4px] h-[100px] bg-[#6b7280]"></span>
  </div>
  <span class="absolute left-[483px] top-[280px] w-[4px] h-[100px] bg-[#6b7280]"></span>
</main>

<!-- status bar -->
<footer class="flex items-center h-[29px] bg-[#fbfbfb] whitespace-nowrap">
  <span class="ml-[2px]">层高：</span><span class="ml-[4px]">3.18</span>
  <span class="ml-[19px]">标高：</span><span class="ml-[4px]">0~3.18</span>
  <span class="ml-[56px]">选中图元：1(1)</span>
  <span class="ml-[22px]">隐藏图元：0</span>
  <span class="flex items-center justify-center ml-[36px] w-[25px] h-[25px] rounded bg-[#e2eefc] border border-[#4a90e2]"><svg class="w-4 h-4"><use href="#s-angle"/></svg></span>
  <span class="flex items-center pl-[3px] ml-[3px] w-[36px] h-[25px] rounded bg-[#e2eefc] border border-[#4a90e2]"><svg class="w-4 h-4 mr-[4px]"><use href="#s-box"/></svg><svg class="w-[6px] h-[4px]"><use href="#car"/></svg></span>
  <span class="flex items-center justify-center ml-[6px] w-[24px] h-[25px] rounded border border-[#aaa]"><svg class="w-4 h-4"><use href="#s-x"/></svg></span>
  <span class="flex items-center pl-[3px] ml-[7px] w-[36px] h-[25px] rounded border border-[#aaa]"><svg class="w-4 h-4 mr-[5px]"><use href="#s-ang2"/></svg><svg class="w-[6px] h-[4px]"><use href="#car"/></svg></span>
  <span class="flex items-center pl-[3px] ml-[3px] w-[35px] h-[25px] rounded border border-[#aaa]"><svg class="w-[20px] h-4 mr-[3px]"><use href="#s-plus"/></svg><svg class="w-[6px] h-[4px]"><use href="#car"/></svg></span>
  <span class="flex items-center justify-center ml-[4px] w-[25px] h-[25px] rounded border border-[#aaa]"><svg class="w-4 h-4"><use href="#s-win"/></svg></span>
  <span class="flex items-center justify-center ml-[4px] w-[24px] h-[25px] rounded border border-[#aaa]"><svg class="w-4 h-4"><use href="#s-curve"/></svg></span>
  <svg class="w-4 h-4 ml-[10px] mr-[4px]"><use href="#s-exp"/></svg>
  <span>按鼠标左键指定第一个角点，或拾取构件图元</span>
</footer>
</body>
</html>
